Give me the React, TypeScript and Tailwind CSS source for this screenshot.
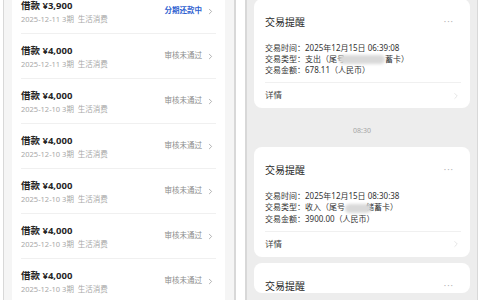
import { ChevronRight } from 'lucide-react';

interface Loan {
  amount: string;
  date: string;
  status: string;
  active?: boolean;
}

const loans: Loan[] = [
  { amount: '¥3,900', date: '2025-12-11', status: '分期还款中', active: true },
  { amount: '¥4,000', date: '2025-12-11', status: '审核未通过' },
  { amount: '¥4,000', date: '2025-12-10', status: '审核未通过' },
  { amount: '¥4,000', date: '2025-12-10', status: '审核未通过' },
  { amount: '¥4,000', date: '2025-12-10', status: '审核未通过' },
  { amount: '¥4,000', date: '2025-12-10', status: '审核未通过' },
  { amount: '¥4,000', date: '2025-12-10', status: '审核未通过' },
];

const font = { fontFamily: '"Noto Sans", "Noto Sans CJK SC", sans-serif' };

function LoanRow({ loan }: { loan: Loan }) {
  return (
    <div className="flex items-center border-b border-[#f0f0f0] pt-[9px] pb-[9px]">
      <div className="flex-1">
        <div className="text-[9.5px] leading-[16px] font-bold text-[#262626]">
          借款 {loan.amount}
        </div>
        <div className="text-[7.5px] leading-[10px] text-[#a8a8a8]">
          {loan.date} 3期&nbsp;&nbsp;生活消费
        </div>
      </div>
      <span
        className={
          loan.active
            ? 'text-[7.5px] font-bold text-[#2f5fd0]'
            : 'text-[7.5px] text-[#8c8c8c]'
        }
      >
        {loan.status}
      </span>
      <ChevronRight className="ml-[4px] mr-[1px] w-[9px] h-[9px] text-[#9a9a9a]" strokeWidth={2} />
    </div>
  );
}

function Blur({ w }: { w: number }) {
  return (
    <span
      className="relative z-10 inline-block h-[9px] align-middle rounded-full bg-[#d9d9d9] blur-[1.5px]"
      style={{ width: w }}
    />
  );
}

function Notice({ children, time }: { children: React.ReactNode; time?: string }) {
  return (
    <div className="bg-white rounded-[8px] px-[11px] pr-[9px]">
      <div className="flex items-center pt-[16px]">
        <span className="flex-1 text-[10px] leading-[14px] text-[#2a2a2a]">交易提醒</span>
        <span className="mr-[7px] text-[9px] leading-[14px] tracking-[1px] text-[#b5b5b5]">···</span>
      </div>
      {time !== undefined && (
        <>
          <div className="mt-[13px] text-[8px] leading-[11px] text-[#333]">{children}</div>
          <div className="mt-[7px] flex h-[26px] items-center border-t border-[#f0f0f0]">
            <span className="flex-1 text-[8.5px] text-[#444]">详情</span>
            <ChevronRight className="w-[10px] h-[10px] text-[#d6d6d6]" strokeWidth={1.5} />
          </div>
        </>
      )}
    </div>
  );
}

export default function App() {
  return (
    <div className="flex h-[300px] w-[480px] overflow-hidden bg-white" style={font}>
      {/* left: loan list */}
      <div className="ml-[3px] h-[300px] w-[233px] overflow-hidden border-l border-r-2 border-[#d8d8d8] bg-[#f5f5f5] pl-[8px] pr-[9px]">
        <div className="h-[300px] overflow-hidden bg-white px-[9px]">
          <div className="mt-[-11px]">
            {loans.map((loan, i) => (
              <LoanRow key={i} loan={loan} />
            ))}
          </div>
        </div>
      </div>

      {/* right: notifications */}
      <div className="ml-[9px] h-[300px] w-[233px] overflow-hidden border-l-2 border-r border-[#d8d8d8] bg-[#ededed] pl-[7px] pr-[7px]">
        <div className="mt-[-1px]">
          <Notice time="">
            <div>交易时间：2025年12月15日 06:39:08</div>
            <div>
              交易类型：支出（尾号
              <span className="-ml-[6px]">
                <Blur w={46} />
              </span>
              蓄卡）
            </div>
            <div>交易金额：678.11（人民币）</div>
          </Notice>
        </div>
        <div className="mt-[18px] mb-[11px] text-center text-[7px] leading-[10px] text-[#a5a5a5]">08:30</div>
        <Notice time="">
          <div>交易时间：2025年12月15日 08:30:38</div>
          <div>
            交易类型：收入（尾号
            <span className="-mr-[5px]">
              <Blur w={26} />
            </span>
            储蓄卡）
          </div>
          <div>交易金额：3900.00（人民币）</div>
        </Notice>
        <div className="mt-[6px]">
          <Notice>{null}</Notice>
        </div>
      </div>
    </div>
  );
}
